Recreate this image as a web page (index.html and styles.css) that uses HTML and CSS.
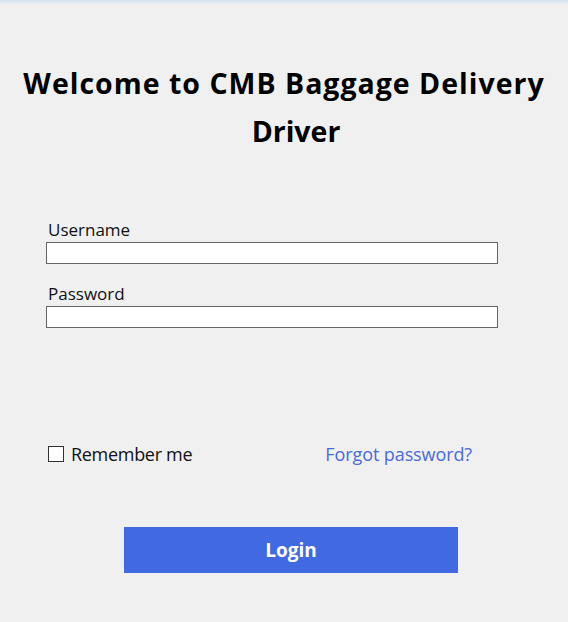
FILE: index.html
```html
<!DOCTYPE html>
<html lang="en">
<head>
<meta charset="utf-8">
<title>CMB Baggage Delivery Driver</title>
<link rel="stylesheet" href="styles.css">
</head>
<body>
<div class="topbar"></div>
<main class="page">
  <h1 class="title">Welcome to CMB Baggage Delivery<br><span class="title-second">Driver</span></h1>
  <form class="login-form">
    <div class="field">
      <label class="field-label" for="username">Username</label>
      <input class="field-input" id="username" type="text">
    </div>
    <div class="field field-password">
      <label class="field-label" for="password">Password</label>
      <input class="field-input" id="password" type="password">
    </div>
    <div class="options-row">
      <label class="remember">
        <span class="checkbox"></span>
        <span class="remember-text">Remember me</span>
      </label>
      <a class="forgot" href="#">Forgot password?</a>
    </div>
    <div class="button-row">
      <button class="login-button" type="button">Login</button>
    </div>
  </form>
</main>
</body>
</html>
```

FILE: styles.css
```css
html, body {
  margin: 0;
  padding: 0;
}
body {
  background: #f0f0f0;
  font-family: "Open Sans", "DejaVu Sans", sans-serif;
  color: #111;
  width: 568px;
  height: 622px;
  overflow: hidden;
}
.topbar {
  height: 5px;
  background: linear-gradient(#d6e1ee, #e6ecf3 60%, #f0f0f0);
}
.page {
  padding: 0 0 0 46px;
}
.title {
  margin: 54px 0 0 -46px;
  width: 568px;
  text-align: center;
  font-size: 28.5px;
  letter-spacing: 1px;
  line-height: 48px;
  font-weight: 700;
  color: #000;
}
.title-second {
  padding-left: 24px;
  letter-spacing: 0;
}
.login-form {
  width: 452px;
  margin-top: 65px;
}
.field {
  display: flex;
  flex-direction: column;
}
.field-password {
  margin-top: 20px;
}
.field-label {
  font-size: 17px;
  line-height: 20px;
  padding-left: 2px;
  color: #111;
}
.field-input {
  margin: 2px 0 0 0;
  box-sizing: border-box;
  width: 452px;
  height: 22px;
  border: 1px solid #646464;
  background: #fff;
  padding: 0 4px;
  font: inherit;
  font-size: 15px;
  outline: none;
}
.options-row {
  margin-top: 116px;
  display: flex;
  justify-content: space-between;
  align-items: center;
  padding-left: 2px;
  padding-right: 26px;
  height: 20px;
}
.remember {
  display: flex;
  align-items: center;
  gap: 7px;
}
.checkbox {
  box-sizing: border-box;
  width: 16px;
  height: 16px;
  border: 1px solid #333;
  background: #fff;
}
.remember-text {
  font-size: 18px;
  letter-spacing: -0.3px;
  line-height: 20px;
  color: #111;
}
.forgot {
  font-size: 18px;
  letter-spacing: -0.1px;
  line-height: 20px;
  color: #4a6bd8;
  text-decoration: none;
}
.button-row {
  margin-top: 63px;
  padding-left: 78px;
}
.login-button {
  display: block;
  width: 334px;
  height: 46px;
  border: 0;
  background: #4169e1;
  color: #fff;
  font-family: inherit;
  font-size: 19px;
  font-weight: 700;
  cursor: pointer;
}
```
